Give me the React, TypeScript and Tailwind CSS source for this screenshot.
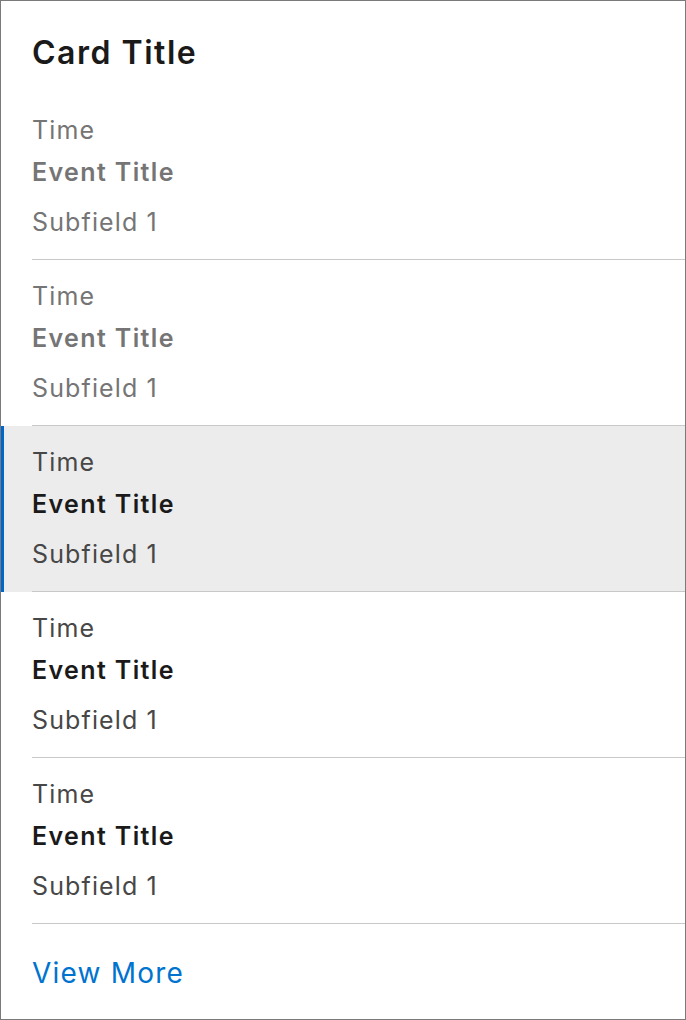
import React from 'react'

type EventItem = {
  time: string
  title: string
  subfield: string
  muted?: boolean
  selected?: boolean
}

const events: EventItem[] = [
  { time: 'Time', title: 'Event Title', subfield: 'Subfield 1', muted: true },
  { time: 'Time', title: 'Event Title', subfield: 'Subfield 1', muted: true },
  { time: 'Time', title: 'Event Title', subfield: 'Subfield 1', selected: true },
  { time: 'Time', title: 'Event Title', subfield: 'Subfield 1' },
  { time: 'Time', title: 'Event Title', subfield: 'Subfield 1' },
]

function EventRow({ item }: { item: EventItem }) {
  return (
    <div className={`relative ${item.selected ? 'bg-[#ececec]' : 'bg-white'}`}>
      {item.selected && <div className="absolute left-0 top-0 bottom-0 w-[3px] bg-[#0066cc]" />}
      <div className="h-[165px] pl-[31px] pt-[19px]">
        <div className={`text-[25px] leading-[34px] tracking-[0.045em] ${item.muted ? 'text-[#757575]' : 'text-[#474747]'}`}>
          {item.time}
        </div>
        <div className={`text-[25px] leading-[50px] tracking-[0.055em] font-semibold ${item.muted ? 'text-[#757575]' : 'text-[#1a1a1a]'}`}>
          {item.title}
        </div>
        <div className={`text-[25px] leading-[50px] tracking-[0.045em] ${item.muted ? 'text-[#757575]' : 'text-[#474747]'}`}>
          {item.subfield}
        </div>
      </div>
      <div className="ml-[31px] h-px bg-[#c8c8c8]" />
    </div>
  )
}

export default function App() {
  return (
    <div
      className="w-[686px] h-[1020px] border border-[#7a7a7a] bg-white overflow-hidden"
      style={{ fontFamily: 'Inter, "Noto Sans", sans-serif' }}
    >
      {/* 헤더 */}
      <div className="h-[93px] pl-[31px] pt-[32px]">
        <h1 className="text-[32px] leading-[40px] tracking-[0.047em] font-semibold text-[#1a1a1a]">Card Title</h1>
      </div>

      {events.map((item, i) => (
        <EventRow key={i} item={item} />
      ))}

      <div className="pl-[31px] pt-[29px]">
        <button className="text-[28px] leading-[40px] tracking-[0.043em] text-[#0073cf]">View More</button>
      </div>
    </div>
  )
}
